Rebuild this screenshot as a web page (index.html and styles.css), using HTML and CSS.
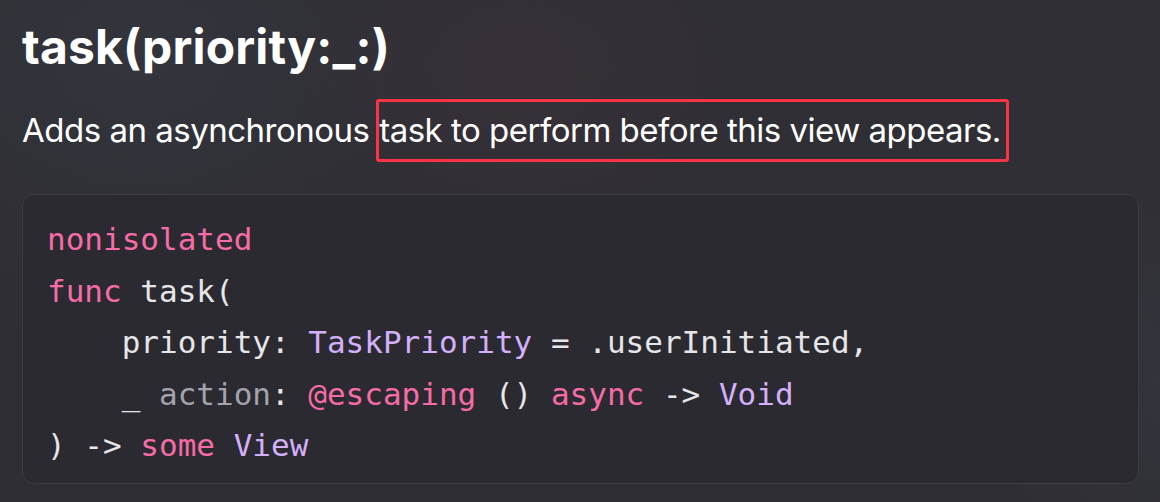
FILE: index.html
```html
<!DOCTYPE html>
<html lang="en">
<head>
<meta charset="utf-8">
<title>task(priority:_:)</title>
<link rel="stylesheet" href="styles.css">
</head>
<body>
<main class="page">
  <h1 class="title">task(priority:_:)</h1>
  <p class="summary">Adds an asynchronous <span class="highlight">task to perform before this view appears.</span></p>
  <pre class="code"><code><span class="kw">nonisolated</span>
<span class="kw">func</span> task(
    priority: <span class="type">TaskPriority</span> = .userInitiated,
    _ <span class="label">action</span>: <span class="kw">@escaping</span> () <span class="kw">async</span> -&gt; <span class="type">Void</span>
) -&gt; <span class="kw">some</span> <span class="type">View</span></code></pre>
</main>
</body>
</html>
```
FILE: styles.css
```css
html, body {
  margin: 0;
  height: 100%;
}
body {
  background:
    radial-gradient(ellipse 320px 230px at 520px 70px, rgba(72, 50, 62, 0.35), transparent 70%),
    radial-gradient(ellipse 420px 320px at 140px 60px, rgba(58, 64, 78, 0.3), transparent 70%),
    radial-gradient(ellipse 260px 300px at 1160px 380px, rgba(58, 62, 74, 0.35), transparent 70%),
    linear-gradient(180deg, #302f35 0%, #2f2e34 100%);
  color: #ffffff;
  font-family: Inter, "Noto Sans", sans-serif;
  overflow: hidden;
}
.page {
  padding: 18px 21px 0 22px;
  display: flex;
  flex-direction: column;
}
.title {
  margin: 0;
  font-size: 48px;
  font-weight: 700;
  line-height: 58px;
  letter-spacing: 0.15px;
}
.summary {
  margin: 31px 0 0;
  font-size: 33px;
  line-height: 46px;
  letter-spacing: -0.5px;
}
.highlight {
  border: 3px solid #fb3346;
  border-radius: 3px;
  padding: 8px 5px 9px 0;
  margin-left: -2px;
}
.code {
  margin: 41px 0 0;
  background: #2a2a30;
  border: 1.5px solid #3c3c42;
  border-radius: 12px;
  padding: 19px 24px 11px 24px;
  font-family: "DejaVu Sans Mono", "Liberation Mono", monospace;
  font-size: 31px;
  line-height: 51.5px;
  color: #e6e6ea;
  white-space: pre;
}
.kw { color: #f66ca6; }
.type { color: #d4b0fb; }
.label { color: #a3a3ab; }
```
